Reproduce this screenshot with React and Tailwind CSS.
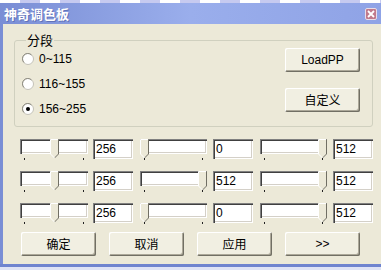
import React from 'react';

const sunken = 'shadow-[inset_1px_1px_0_#808080,inset_2px_2px_0_#404040,inset_-1px_-1px_0_#ffffff,inset_-2px_-2px_0_#d4d0c8]';
const raised = 'shadow-[inset_1px_1px_0_#ffffff,inset_-1px_-1px_0_#716f64,inset_-2px_-2px_0_#aca899]';

const Radio = ({ checked, label }) => (
  <div className="flex items-center h-[13px] gap-[5px]">
    <svg width="12" height="12" viewBox="0 0 12 12">
      <circle cx="6" cy="6" r="5.5" fill="#ffffff" stroke="#c4c2b8" />
      <path d="M2 9.5 A5 5 0 0 1 9.5 2" fill="none" stroke="#8e8c80" strokeWidth="1" />
      {checked && <circle cx="6" cy="6" r="2" fill="#000000" />}
    </svg>
    <span className="text-[12px] leading-none text-black">{label}</span>
  </div>
);

const Button = ({ children, cjk }) => (
  <button
    className={`w-[75px] h-[24px] bg-[#f1efe2] rounded-[2px] ${raised} flex items-center justify-center text-[12px] text-black ${cjk ? "font-['Noto_Sans_CJK_SC',sans-serif]" : ''}`}
  >
    {children}
  </button>
);

// thumb drawn as the classic pointed trackbar knob
const Thumb = ({ pos }) => (
  <svg width="9" height="20" viewBox="0 0 9 20" className={`absolute top-0 ${pos}`}>
    <path d="M0.5 0.5 H8.5 V15 L4.5 19 L0.5 15 Z" fill="#ece9d8" />
    <path d="M0.5 15 V0.5 H8" fill="none" stroke="#ffffff" />
    <path d="M8.5 0.5 V15 L4.5 19" fill="none" stroke="#716f64" />
    <path d="M0.5 15 L4.5 19" fill="none" stroke="#ffffff" />
  </svg>
);

const Slider = ({ width, pos }) => (
  <div className={`relative h-[20px] ${width}`}>
    <div className={`h-[15px] bg-white ${sunken}`} />
    <div className="absolute left-[4px] top-[19px] w-[1px] h-[2px] bg-[#222]" />
    <div className="absolute right-[4px] top-[19px] w-[1px] h-[2px] bg-[#222]" />
    <Thumb pos={pos} />
  </div>
);

const Field = ({ value }) => (
  <div className={`w-[40px] h-[20px] bg-white ${sunken} flex items-center pl-[3px] text-[12px] text-black`}>
    {value}
  </div>
);

const rows = [
  { p1: 'left-[30px]', p2: 'left-0', v2: '0' },
  { p1: 'left-[30px]', p2: 'right-0', v2: '512' },
  { p1: 'left-[30px]', p2: 'left-0', v2: '0' },
];

export default function App() {
  return (
    <div className="w-[381px] h-[270px] flex flex-col overflow-hidden bg-[#ece9d8] font-['Liberation_Sans','Noto_Sans_CJK_SC',sans-serif]">
      <div className="h-[3px] bg-[repeating-linear-gradient(90deg,#ffffff_0_20px,#c6caf0_20px_40px)]" />
      <div className="h-[21px] flex items-center pl-[4px] pr-[4px] bg-gradient-to-r from-[#7a8ed5] via-[#9aaeec] to-[#8fa3e6]">
        <span className="text-[13px] font-bold text-white font-['Noto_Sans_CJK_SC',sans-serif] leading-none [text-shadow:1px_1px_0_#6273b8]">
          神奇调色板
        </span>
        <div className="ml-auto mt-[1px] w-[12px] h-[12px] rounded-[2px] bg-[#c07a8c] border border-[#e8dde8] flex items-center justify-center">
          <svg width="8" height="8" viewBox="0 0 8 8">
            <path d="M1 1 L7 7 M7 1 L1 7" stroke="#ffffff" strokeWidth="1.8" />
          </svg>
        </div>
      </div>
      <div className="flex flex-1 min-h-0">
        <div className="w-[3px] bg-[#7a8ed5]" />
        <div className="flex-1 flex flex-col pl-[11px] pr-[8px] pt-[9px]">
          <fieldset className="border border-[#d0d0bf] rounded-[3px] px-[7px] pb-[11px]">
            <legend className="ml-[4px] px-[1px] text-[13px] leading-[14px] text-black font-['Noto_Sans_CJK_SC',sans-serif]">
              分段
            </legend>
            <div className="flex">
              <div className="flex flex-col gap-[12px] pt-[5px]">
                <Radio label="0~115" />
                <Radio label="116~155" />
                <Radio checked label="156~255" />
              </div>
              <div className="ml-auto mr-[5px] flex flex-col gap-[16px] pt-[1px]">
                <Button>LoadPP</Button>
                <Button cjk>自定义</Button>
              </div>
            </div>
          </fieldset>

          <div className="flex flex-col gap-[12px] mt-[12px] pl-[6px]">
            {rows.map((r, i) => (
              <div key={i} className="flex items-start">
                <Slider width="w-[68px]" pos={r.p1} />
                <div className="ml-[5px]"><Field value="256" /></div>
                <div className="ml-[7px]"><Slider width="w-[67px]" pos={r.p2} /></div>
                <div className="ml-[6px]"><Field value={r.v2} /></div>
                <div className="ml-[7px]"><Slider width="w-[67px]" pos="right-0" /></div>
                <div className="ml-[6px]"><Field value="512" /></div>
              </div>
            ))}
          </div>

          <div className="flex gap-[13px] mt-[9px] pl-[7px]">
            <Button cjk>确定</Button>
            <Button cjk>取消</Button>
            <Button cjk>应用</Button>
            <Button>&gt;&gt;</Button>
          </div>
        </div>
      </div>
      <div className="h-[3px] bg-[#6f84cf]" />
      <div className="h-[3px] bg-[#dfe3f5]" />
    </div>
  );
}
